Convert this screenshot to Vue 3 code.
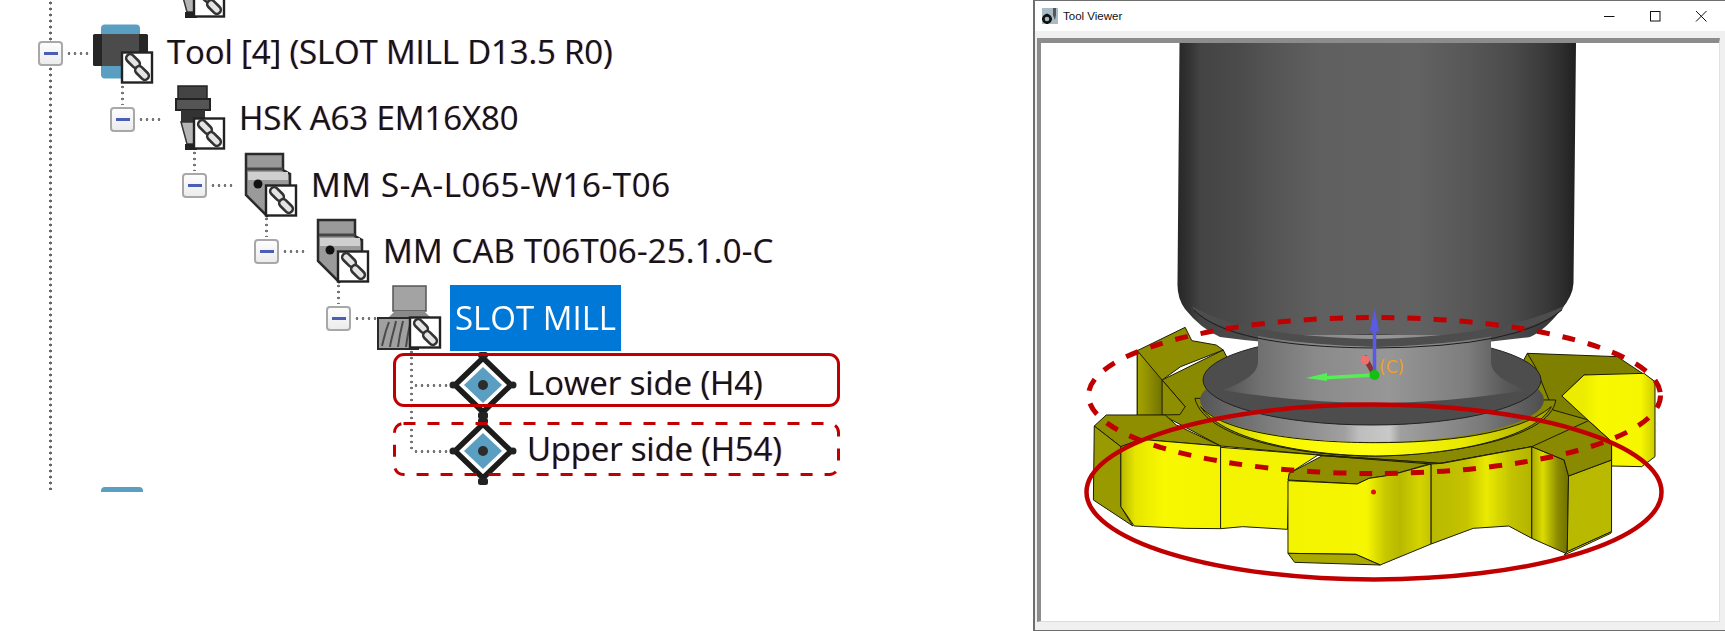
<template>
  <div class="page">
    <div class="tree-pane">
      <div class="tree">
        <span class="trunk"></span>
        <div
          v-for="row in rows"
          :key="row.id"
          class="row"
          :style="{ paddingLeft: row.level * 72 + 38 + 'px' }"
        >
          <div class="gutter">
            <template v-if="row.toggle">
              <span v-if="row.level > 0" class="stem"></span>
              <span class="toggle"><i></i></span>
              <span class="dots"></span>
            </template>
          </div>

          <svg class="icon" viewBox="0 -6 60 72" width="60" height="72">
            <g v-if="row.icon === 'tool'">
              <rect x="8" y="1.5" width="39" height="54" rx="4" fill="#5a9fc2" />
              <rect x="0" y="11" width="55" height="32" rx="1.5" fill="#262626" />
              <rect x="9" y="11" width="37" height="32" fill="#4b4b4b" />
            </g>
            <g v-else-if="row.icon === 'holder'">
              <path d="M13-3h29v13H13z" fill="#444" stroke="#222" stroke-width="1.5" />
              <path d="M11 10h34v11H11z" fill="#555" stroke="#222" stroke-width="2" />
              <path d="M16 21h24v12H16z" fill="#333" />
              <path d="M16 33h24l-8 22H22z" fill="#b5b5b5" stroke="#333" stroke-width="1.5" />
              <path d="M20 55h12v6H20z" fill="#222" />
            </g>
            <g v-else-if="row.icon === 'adapter'">
              <path d="M9-2h37v16l7 4v22L30 60 9 39z" fill="#9a9a9a" stroke="#2a2a2a" stroke-width="2.5" />
              <path d="M10 13h36" stroke="#444" stroke-width="3" fill="none" />
              <path d="M11 16h40v8H11z" fill="#cfcfcf" />
              <circle cx="21" cy="28" r="4.5" fill="#111" />
            </g>
            <g v-else-if="row.icon === 'mill'">
              <path d="M12-2h33v25H12z" fill="#a3a3a3" stroke="#555" stroke-width="1.5" />
              <path d="M14 23h29l8 8H6z" fill="#8a8a8a" />
              <path d="M-3 30h40v31H-3z" fill="#a0a0a0" stroke="#2a2a2a" stroke-width="2" />
              <path d="M1 58c2-8 3-14 7-24M9 59c1-8 4-16 6-26M17 59c1-8 2-14 5-26M25 59c1-8 2-16 5-26" stroke="#4a4a4a" stroke-width="2" fill="none" />
            </g>
            <g v-else>
              <path d="M30 4 58 31 30 58 2 31z" fill="#fff" stroke="#1c1c1c" stroke-width="5.5" stroke-linejoin="round" />
              <path d="M30 13 49 31 30 49 11 31z" fill="#5a9fc2" />
              <circle cx="30" cy="31" r="5" fill="#2c2c2c" />
              <rect x="25" y="-2" width="10" height="6" rx="2.5" fill="#222" />
              <rect x="25" y="58" width="10" height="7" rx="2.5" fill="#222" />
              <circle cx="0" cy="31" r="3.5" fill="#222" />
              <circle cx="60" cy="31" r="3.5" fill="#222" />
            </g>
            <g v-if="row.icon !== 'probe'">
              <rect x="29" y="29.5" width="30" height="30" fill="#fff" stroke="#222" stroke-width="2.4" />
              <rect x="32" y="34" width="16" height="8" rx="4" transform="rotate(45 40 38)" fill="#e4e4e4" stroke="#333" stroke-width="2.6" />
              <rect x="41" y="46" width="16" height="8" rx="4" transform="rotate(45 49 50)" fill="#e4e4e4" stroke="#333" stroke-width="2.6" />
            </g>
          </svg>

          <span
            v-if="row.label"
            class="label"
            :class="{ selected: row.selected }"
            :style="{ letterSpacing: row.tracking + 'px' }"
          >{{ row.label }}</span>
        </div>

        <span class="branch"></span>
        <span class="twig twig-a"></span>
        <span class="twig twig-b"></span>
        <span class="mark mark-solid"></span>
        <svg class="mark mark-dashed" viewBox="0 0 447 54" width="447" height="54">
          <rect x="1.5" y="1.5" width="444" height="51" rx="9" />
        </svg>
        <span class="next-icon"></span>
      </div>
    </div>

    <div class="window">
      <div class="titlebar">
        <svg class="app-icon" viewBox="0 0 16 16" width="16" height="16">
          <rect width="16" height="16" fill="#a9bcc6" />
          <path d="M11 0h3v7l-1 5-1-2-1-3z" fill="#555" />
          <circle cx="5" cy="11" r="3.6" fill="none" stroke="#111" stroke-width="2.6" />
          <path d="M5 5.8v2M5 14.2v1.8M0 11h2M8 11h2" stroke="#111" stroke-width="2" />
        </svg>
        <span class="title">Tool Viewer</span>
        <div class="controls">
          <svg viewBox="0 0 12 12" width="12" height="12"><path d="M1 6.5h10.5" stroke="#111" fill="none" /></svg>
          <svg viewBox="0 0 12 12" width="12" height="12"><rect x="1.5" y="1.5" width="9.5" height="9.5" stroke="#111" fill="none" /></svg>
          <svg viewBox="0 0 12 12" width="12" height="12"><path d="M1 1l10.5 10.5M11.5 1L1 11.5" stroke="#111" fill="none" /></svg>
        </div>
      </div>

      <div class="canvas">
        <svg class="scene" viewBox="1041 43 678 579" width="678" height="579">
          <defs>
            <linearGradient id="cyl" x1="1177" x2="1577" gradientUnits="userSpaceOnUse">
              <stop offset="0" stop-color="#262626" />
              <stop offset=".03" stop-color="#333" />
              <stop offset=".06" stop-color="#444" />
              <stop offset=".16" stop-color="#4b4b4b" />
              <stop offset=".24" stop-color="#555" />
              <stop offset=".36" stop-color="#606060" />
              <stop offset=".6" stop-color="#626262" />
              <stop offset=".74" stop-color="#565656" />
              <stop offset=".84" stop-color="#4a4a4a" />
              <stop offset=".92" stop-color="#3a3a3a" />
              <stop offset=".97" stop-color="#2b2b2b" />
              <stop offset="1" stop-color="#1e1e1e" />
            </linearGradient>
            <linearGradient id="neck" x1="1215" x2="1530" gradientUnits="userSpaceOnUse">
              <stop offset="0" stop-color="#4c4c4c" />
              <stop offset=".14" stop-color="#707070" />
              <stop offset=".32" stop-color="#8a8a8a" />
              <stop offset=".55" stop-color="#979797" />
              <stop offset=".8" stop-color="#7d7d7d" />
              <stop offset=".92" stop-color="#5a5a5a" />
              <stop offset="1" stop-color="#4a4a4a" />
            </linearGradient>
            <linearGradient id="rim" x1="1200" x2="1545" gradientUnits="userSpaceOnUse">
              <stop offset="0" stop-color="#555" />
              <stop offset=".2" stop-color="#7d7d7d" />
              <stop offset=".42" stop-color="#a0a0a0" />
              <stop offset=".46" stop-color="#bdbdbd" />
              <stop offset=".55" stop-color="#c8c8c8" />
              <stop offset=".58" stop-color="#a0a0a0" />
              <stop offset=".82" stop-color="#7a7a7a" />
              <stop offset="1" stop-color="#4d4d4d" />
            </linearGradient>
            <linearGradient id="band" x1="380" x2="1180" gradientUnits="userSpaceOnUse">
              <stop offset="0" stop-color="#b0b000" />
              <stop offset=".2" stop-color="#f7f700" />
              <stop offset=".5" stop-color="#ffff10" />
              <stop offset=".75" stop-color="#e8e800" />
              <stop offset="1" stop-color="#a0a000" />
            </linearGradient>
            <linearGradient id="faceA" x1="143" x2="430" gradientUnits="userSpaceOnUse">
              <stop offset="0" stop-color="#a9a900" />
              <stop offset=".2" stop-color="#b2b200" />
              <stop offset=".33" stop-color="#e6e600" />
              <stop offset=".55" stop-color="#f8f800" />
              <stop offset="1" stop-color="#f4f400" />
            </linearGradient>
            <linearGradient id="faceB" x1="582" x2="905" gradientUnits="userSpaceOnUse">
              <stop offset="0" stop-color="#f4f400" />
              <stop offset=".55" stop-color="#f6f600" />
              <stop offset=".68" stop-color="#c8c800" />
              <stop offset=".78" stop-color="#b8b800" />
              <stop offset=".92" stop-color="#d4d400" />
              <stop offset="1" stop-color="#c4c400" />
            </linearGradient>
            <linearGradient id="faceC" x1="905" x2="1132" gradientUnits="userSpaceOnUse">
              <stop offset="0" stop-color="#b8b800" />
              <stop offset=".35" stop-color="#c4c400" />
              <stop offset=".55" stop-color="#eaea00" />
              <stop offset=".8" stop-color="#c2c200" />
              <stop offset="1" stop-color="#b4b400" />
            </linearGradient>
            <linearGradient id="faceD" x1="1132" x2="1215" gradientUnits="userSpaceOnUse">
              <stop offset="0" stop-color="#a8a800" />
              <stop offset=".3" stop-color="#dcdc00" />
              <stop offset=".7" stop-color="#8c8c00" />
              <stop offset="1" stop-color="#6e6e00" />
            </linearGradient>
            <linearGradient id="faceE" x1="1250" x2="1410" gradientUnits="userSpaceOnUse">
              <stop offset="0" stop-color="#ecec00" />
              <stop offset=".2" stop-color="#f8f800" />
              <stop offset=".8" stop-color="#f6f600" />
              <stop offset="1" stop-color="#cccc00" />
            </linearGradient>
            <linearGradient id="faceF" x1="242" x2="300" gradientUnits="userSpaceOnUse">
              <stop offset="0" stop-color="#a5a500" />
              <stop offset=".5" stop-color="#8c8c00" />
              <stop offset="1" stop-color="#6f6f00" />
            </linearGradient>
          </defs>

          <!-- spindle -->
          <path
            d="M1179.5 43H1576L1573.5 283Q1573 296 1561 310Q1544 331 1530 337Q1375 358 1220 337Q1200 328 1185 309Q1177 298 1177.5 283Z"
            fill="url(#cyl)"
          />

          <!-- gear, drawn in the coordinates of a 2.256 x 3 enlargement -->
          <g transform="translate(1030 310) scale(.44326 .33333)" stroke="#1c1c00" stroke-width="1" stroke-linejoin="round">
            <g class="hair">
              <!-- back teeth -->
              <path d="M298 210 436 120 470 210 1090 210 1122 130 1250 195 1200 258 1260 332 1312 395 1132 410 925 460 650 435 430 408 300 316 350 290Z" fill="#8a8a00" />
              <path d="M242 122 350 52 365 92 420 105 436 120 340 170 298 210 350 290 338 314 242 316Z" fill="#8e8e00" />
              <path d="M242 122 298 210 298 316 242 316Z" fill="url(#faceF)" />
              <path d="M1122 130 1325 140 1410 215 1250 195 1200 258 1260 330 1180 300 1140 170Z" fill="#7f7f00" />
              <path d="M1250 195 1385 190 1410 215 1410 440 1380 470 1312 468 1312 395 1260 332 1200 258Z" fill="url(#faceE)" />

              <!-- ring under the disc -->
              <path d="M372 265C395 395 640 440 780 438 930 436 1175 390 1186 270Z" fill="#8a8a00" />
              <path d="M385 290C440 375 640 398 780 398 930 398 1100 375 1176 290 1140 385 950 436 780 438 610 436 430 385 385 290Z" fill="url(#band)" />

              <!-- front left tooth -->
              <path d="M145 348 172 315 305 315 330 345 430 408 250 388 205 410Z" fill="#8e8e00" />
              <path d="M145 348 205 410 205 590 232 648 143 570Z" fill="#999900" />
              <path d="M205 410 250 388 430 408 430 656 350 655 235 648 205 590Z" fill="url(#faceA)" />
              <path d="M430 412 650 435 585 490 581 658 480 650 430 656Z" fill="#f4f400" />

              <!-- centre tooth -->
              <path d="M585 490 660 437 905 460 815 495 765 505 738 522 582 510Z" fill="#8e8e00" />
              <path d="M582 512 738 522 765 505 815 495 905 462 905 702 790 765 735 733 582 730Z" fill="url(#faceB)" />
              <path d="M582 730 735 733 790 765 597 757Z" fill="#aaaa00" />

              <!-- right part -->
              <path d="M650 435 925 460 1132 410 1205 450 905 462 660 437Z" fill="#8a8a00" />
              <path d="M905 462 930 460 1132 410 1132 685 1080 648 1000 655 905 702Z" fill="url(#faceC)" />
              <path d="M1132 410 1205 450 1215 498 1212 732 1132 685Z" fill="url(#faceD)" />
              <path d="M1215 498 1312 450 1312 665 1212 725Z" fill="#b9b900" />
              <path d="M1212 725 1312 665 1310 670 1205 735Z" fill="#e0e000" />
              <path d="M1132 410 1260 332 1312 395 1312 450 1215 498 1205 450Z" fill="#8a8a00" />
            </g>
          </g>

          <!-- disc and neck -->
          <ellipse cx="1372" cy="400" rx="172" ry="42" fill="url(#rim)" />
          <ellipse cx="1372" cy="380" rx="169" ry="45" fill="#4d4d4d" stroke="#222" />
          <path
            d="M1258 335V362Q1258 378 1222 390Q1300 403 1372 403Q1445 403 1527 390Q1491 378 1491 362V335Z"
            fill="url(#neck)"
          />
          <path
            d="M1194 310Q1230 343 1375 347Q1520 343 1562 310L1564 306Q1500 336 1375 339Q1240 336 1192 306Z"
            fill="#4d4d4d"
          />
          <path d="M1194 310Q1230 347 1375 348Q1520 347 1562 310" fill="none" stroke="#1c1c1c" />

          <!-- work axes -->
          <path d="M1374.5 375 1364 356" stroke="#833" stroke-width="5" />
          <circle cx="1365" cy="360" r="4.5" fill="#f07070" />
          <path d="M1374.5 375V325" stroke="#5a5ae8" stroke-width="3.5" />
          <path d="M1374.5 309 1379 331H1370Z" fill="#5a5ae8" />
          <path d="M1374 375 1320 378" stroke="#55ee55" stroke-width="3.5" />
          <path d="M1306 378 1327 373 1327 381Z" fill="#55ee55" />
          <circle cx="1374.5" cy="375" r="5" fill="#12c012" />
          <text x="1379" y="373" class="axis-label">(C)</text>
          <circle cx="1373.5" cy="492" r="2.5" fill="#e01010" />

          <!-- markup -->
          <ellipse class="ring-dashed" cx="1374.5" cy="395.5" rx="286" ry="78" />
          <ellipse class="ring-solid" cx="1374" cy="492" rx="287.5" ry="87.5" />
        </svg>
      </div>
    </div>
  </div>
</template>

<script setup>
const rows = [
  { id: 0, level: 1, icon: 'holder', toggle: false, label: '' },
  { id: 1, level: 0, icon: 'tool', toggle: true, label: 'Tool [4] (SLOT MILL D13.5 R0)', tracking: -0.15 },
  { id: 2, level: 1, icon: 'holder', toggle: true, label: 'HSK A63 EM16X80', tracking: -0.1 },
  { id: 3, level: 2, icon: 'adapter', toggle: true, label: 'MM S-A-L065-W16-T06', tracking: 0.65 },
  { id: 4, level: 3, icon: 'adapter', toggle: true, label: 'MM CAB T06T06-25.1.0-C', tracking: 0.2 },
  { id: 5, level: 4, icon: 'mill', toggle: true, label: 'SLOT MILL', selected: true, tracking: 0 },
  { id: 6, level: 5, icon: 'probe', toggle: false, label: 'Lower side (H4)', tracking: -0.1 },
  { id: 7, level: 5, icon: 'probe', toggle: false, label: 'Upper side (H54)', tracking: -0.2 },
]
</script>

<style>
html, body { margin: 0; background: #fff; }
</style>

<style scoped>
.page {
  display: flex;
  width: 1725px;
  height: 631px;
  overflow: hidden;
  background: #fff;
  font-family: "Open Sans", "Noto Sans", sans-serif;
}

.tree-pane { flex: none; width: 1033px; }
.tree {
  position: relative;
  height: 492px;
  overflow: hidden;
}
.row {
  display: flex;
  align-items: center;
  height: 66.2px;
  box-sizing: border-box;
  white-space: nowrap;
  filter: blur(.45px);
}
.row:first-of-type { margin-top: -46px; }
.gutter {
  position: relative;
  flex: none;
  width: 55px;
  height: 25px;
}
.toggle {
  position: absolute;
  left: 0;
  top: 0;
  display: flex;
  align-items: center;
  justify-content: center;
  box-sizing: border-box;
  width: 25px;
  height: 25px;
  border: 2.5px solid #a8a8a8;
  border-radius: 4px;
  background: linear-gradient(#fdfdfd, #ececec);
}
.toggle i {
  display: block;
  width: 14px;
  height: 3px;
  background: #4a5fb4;
}
.dots {
  position: absolute;
  left: 28px;
  top: 11px;
  width: 23px;
  height: 3px;
  background: radial-gradient(circle, #777 1.2px, transparent 1.6px) 0 0 / 6px 3px repeat-x;
}
.stem {
  position: absolute;
  left: 11px;
  top: -23px;
  width: 3px;
  height: 21px;
  background: radial-gradient(circle, #777 1.2px, transparent 1.6px) 0 0 / 3px 6px repeat-y;
}
.icon { flex: none; margin-right: 9px; overflow: visible; }
.label {
  flex: none;
  padding: 0 5px;
  font-size: 33px;
  line-height: 66px;
  color: #14141a;
  text-shadow: -.7px 0 rgba(255, 140, 0, .45), .7px 0 rgba(50, 60, 255, .45);
  transform: translateY(-1px);
}
.label.selected { background: #0078d7; color: #fff; text-shadow: none; transform: none; }

.trunk {
  position: absolute;
  left: 49px;
  top: 0;
  width: 3px;
  height: 490px;
  background: radial-gradient(circle, #666 1.3px, transparent 1.7px) 0 0 / 3px 6px repeat-y;
}
.branch {
  position: absolute;
  left: 410px;
  top: 349px;
  width: 3px;
  height: 103px;
  background: radial-gradient(circle, #777 1.2px, transparent 1.6px) 0 0 / 3px 6px repeat-y;
}
.twig {
  position: absolute;
  left: 413px;
  width: 36px;
  height: 3px;
  background: radial-gradient(circle, #777 1.2px, transparent 1.6px) 0 0 / 6px 3px repeat-x;
}
.twig-a { top: 384px; }
.twig-b { top: 450px; }
.mark {
  position: absolute;
  left: 393px;
  width: 447px;
  height: 54px;
  box-sizing: border-box;
}
.mark-solid { top: 353px; border: 3px solid #c00000; border-radius: 11px; }
.mark-dashed { top: 422px; }
.mark-dashed rect {
  fill: none;
  stroke: #c00000;
  stroke-width: 3;
  stroke-dasharray: 12 12;
}
.next-icon {
  position: absolute;
  left: 101px;
  top: 487px;
  width: 42px;
  height: 12px;
  border-radius: 4px;
  background: #5a9fc2;
}

.window {
  flex: 1;
  display: flex;
  flex-direction: column;
  box-sizing: border-box;
  height: 631px;
  border: 1px solid #6e6e6e;
  border-width: 1px 2px 1px 2px;
  background: #f0f0f0;
}
.titlebar {
  display: flex;
  align-items: center;
  flex: none;
  height: 30px;
  padding-left: 7px;
  background: #fff;
}
.app-icon { flex: none; margin-right: 5px; }
.title {
  font-family: "Liberation Sans", sans-serif;
  font-size: 11.5px;
  color: #111;
}
.controls {
  display: flex;
  gap: 34px;
  margin-left: auto;
  margin-right: 18px;
}
.canvas {
  flex: 1;
  margin: 7px 5px 8px 2px;
  box-sizing: border-box;
  overflow: hidden;
  background: #fff;
  border-style: solid;
  border-width: 5px 1px 1px 4px;
  border-color: #8c8c8c #e2e2e2 #dcdcdc #8c8c8c;
}
.scene { display: block; }
.hair path { vector-effect: non-scaling-stroke; }
.axis-label {
  font-family: "DejaVu Sans", sans-serif;
  font-size: 17px;
  fill: #f0a020;
}
.ring-dashed {
  fill: none;
  stroke: #c00000;
  stroke-width: 5;
  stroke-dasharray: 13 13;
}
.ring-solid {
  fill: none;
  stroke: #c00000;
  stroke-width: 4.5;
}
</style>
